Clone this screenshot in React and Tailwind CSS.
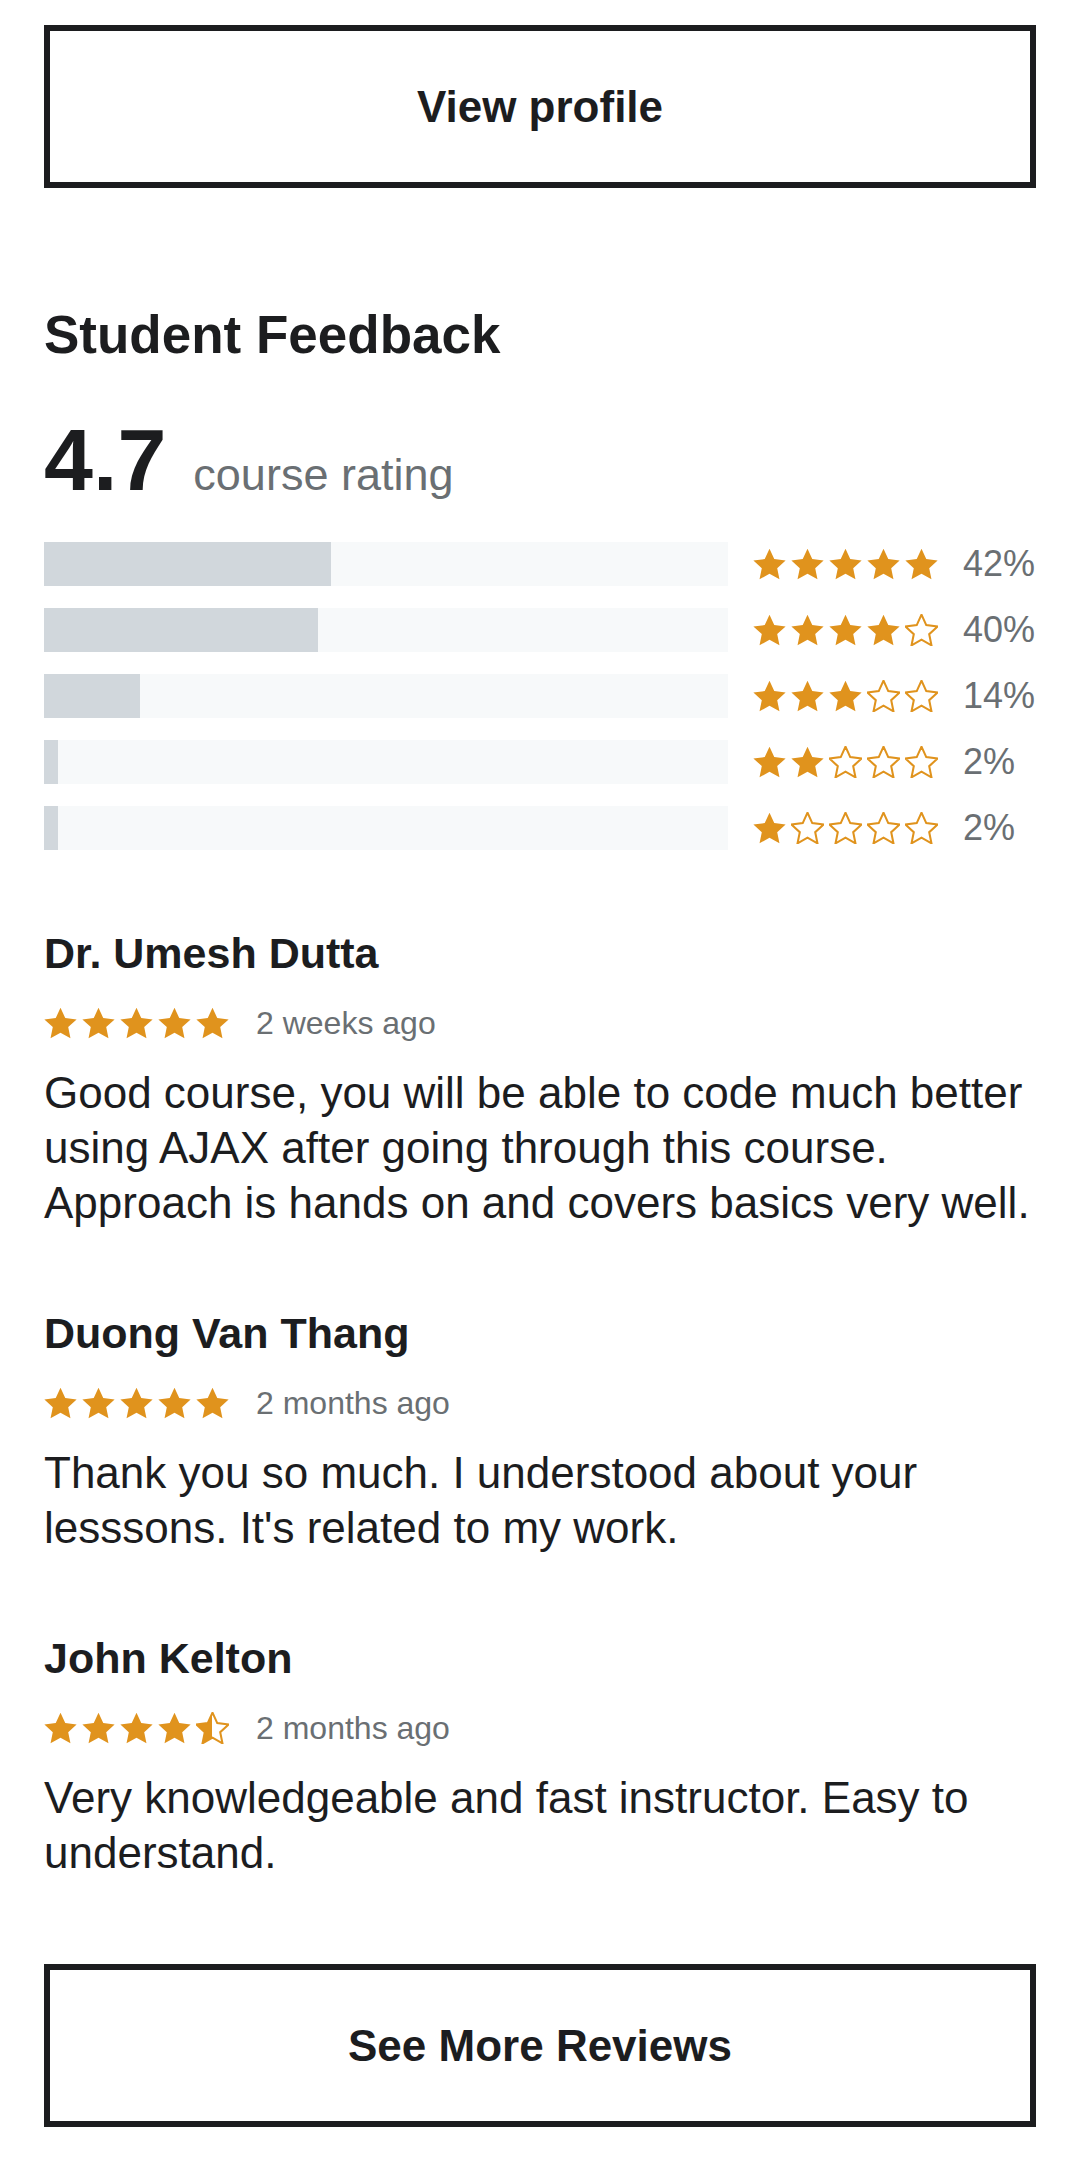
import React, { useId } from "react";

const STAR_POINTS =
  "12,1 15.23,8.05 22.94,8.95 17.23,14.2 18.76,21.8 12,18 5.24,21.8 6.77,14.2 1.06,8.95 8.77,8.05";

const Star = ({ type = "full" }) => {
  const id = useId();
  if (type === "full") {
    return (
      <svg width="33" height="32" viewBox="0.8 0.6 22.4 21.6">
        <polygon points={STAR_POINTS} fill="#e0931d" />
      </svg>
    );
  }
  if (type === "half") {
    return (
      <svg width="33" height="32" viewBox="0.8 0.6 22.4 21.6">
        <defs>
          <linearGradient id={id} x1="0" x2="1" y1="0" y2="0">
            <stop offset="50%" stopColor="#e0931d" />
            <stop offset="50%" stopColor="#ffffff" stopOpacity="0" />
          </linearGradient>
        </defs>
        <polygon
          points={STAR_POINTS}
          fill={`url(#${id})`}
          stroke="#e0931d"
          strokeWidth="1.4"
        />
      </svg>
    );
  }
  return (
    <svg width="33" height="32" viewBox="0.8 0.6 22.4 21.6">
      <polygon
        points={STAR_POINTS}
        fill="none"
        stroke="#e0931d"
        strokeWidth="1.4"
      />
    </svg>
  );
};

const Stars = ({ rating }) => {
  const list = [];
  for (let i = 1; i <= 5; i++) {
    if (rating >= i) list.push("full");
    else if (rating >= i - 0.5) list.push("half");
    else list.push("empty");
  }
  return (
    <div className="flex items-center gap-[5px]">
      {list.map((t, i) => (
        <Star key={i} type={t} />
      ))}
    </div>
  );
};

const breakdown = [
  { stars: 5, pct: 42 },
  { stars: 4, pct: 40 },
  { stars: 3, pct: 14 },
  { stars: 2, pct: 2 },
  { stars: 1, pct: 2 },
];

const reviews = [
  {
    name: "Dr. Umesh Dutta",
    rating: 5,
    time: "2 weeks ago",
    text: "Good course, you will be able to code much better using AJAX after going through this course. Approach is hands on and covers basics very well.",
  },
  {
    name: "Duong Van Thang",
    rating: 5,
    time: "2 months ago",
    text: "Thank you so much. I understood about your lesssons. It's related to my work.",
  },
  {
    name: "John Kelton",
    rating: 4.5,
    time: "2 months ago",
    text: "Very knowledgeable and fast instructor. Easy to understand.",
  },
];

const App = () => {
  return (
    <div
      className="w-[1080px] bg-white px-[44px] pt-[25px] pb-[40px] text-[#1c1d1f]"
      style={{ fontFamily: '"Liberation Sans", Arial, sans-serif' }}
    >
      <button
        type="button"
        className="w-full h-[163px] border-[6px] border-[#1c1d1f] flex items-center justify-center text-[44px] font-bold"
      >
        View profile
      </button>

      <h2 className="mt-[115px] text-[53px] leading-[64px] font-bold">
        Student Feedback
      </h2>

      <div className="mt-[49px] flex items-baseline">
        <span className="text-[88px] leading-[88px] font-bold">4.7</span>
        <span className="ml-[27px] text-[45px] leading-[53px] text-[#6a6f73]">
          course rating
        </span>
      </div>

      <div className="mt-[38px] flex flex-col gap-[22px]">
        {breakdown.map((row) => (
          <div key={row.stars} className="flex items-center h-[44px]">
            <div className="flex-1 h-[44px] bg-[#f7f9fa]">
              <div
                className="h-full bg-[#d1d7dc]"
                style={{ width: row.pct + "%" }}
              />
            </div>
            <div className="ml-[25px]">
              <Stars rating={row.stars} />
            </div>
            <span className="ml-[25px] w-[73px] text-[36px] leading-[44px] text-[#6a6f73]">
              {row.pct}%
            </span>
          </div>
        ))}
      </div>

      <div className="mt-[78px] flex flex-col gap-[78px]">
        {reviews.map((r) => (
          <div key={r.name}>
            <h3 className="text-[43px] leading-[50px] font-bold">{r.name}</h3>
            <div className="mt-[25px] h-[40px] flex items-center">
              <Stars rating={r.rating} />
              <span className="ml-[27px] text-[32px] leading-[40px] text-[#6a6f73]">
                {r.time}
              </span>
            </div>
            <p className="mt-[22px] text-[44px] leading-[55px]">{r.text}</p>
          </div>
        ))}
      </div>

      <button
        type="button"
        className="mt-[84px] w-full h-[163px] border-[6px] border-[#1c1d1f] flex items-center justify-center text-[44px] font-bold"
      >
        See More Reviews
      </button>
    </div>
  );
};

export default App;
